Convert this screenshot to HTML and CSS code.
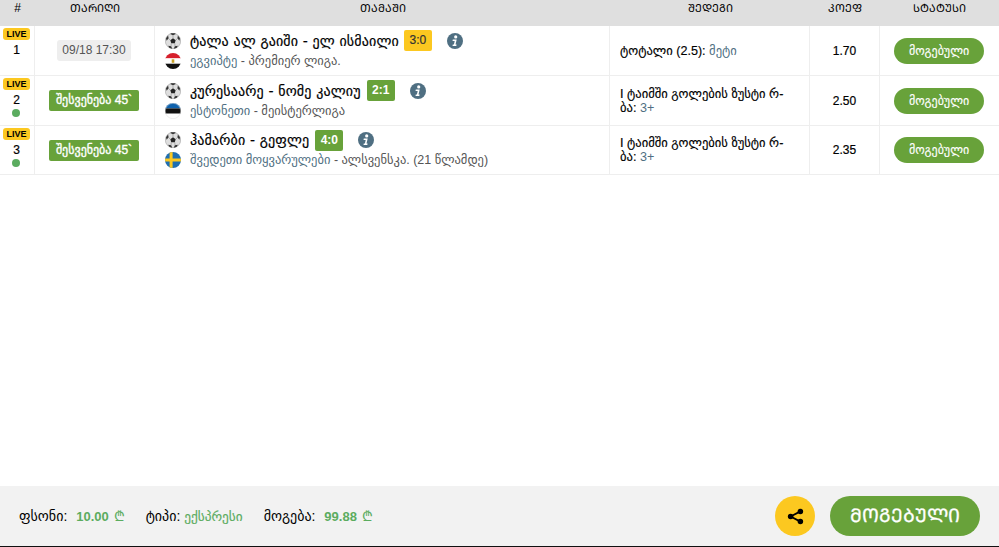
FILE: index.html
```html
<!DOCTYPE html>
<html lang="ka">
<head>
<meta charset="utf-8">
<title>ბილეთი</title>
<link rel="stylesheet" href="styles.css">
</head>
<body>
<svg class="defs" width="0" height="0" aria-hidden="true">
  <defs>
    <symbol id="ball" viewBox="0 0 16 16">
      <circle cx="8" cy="8" r="7.7" fill="#dedede" stroke="#8f8f8f" stroke-width=".5"/>
      <path d="M8 5.2l2.7 2-1 3.1H6.3l-1-3.1z" fill="#222"/>
      <path d="M5.2 .9L8 2.2l2.8-1.3-1-.6H6.2zM1 5.2l2.1-2.6.5 2.6-2 2.6zM15 5.2l-2.1-2.6-.5 2.6 2 2.6zM3.2 12.8l3 .5 1 2.4-3-1zM12.8 12.8l-3 .5-1 2.4 3-1z" fill="#333"/>
      <path d="M8 5.2v-3M10.7 7.2l2-2M9.7 10.3l.4 2.8M6.3 10.3L6 13.2M5.3 7.2l-2-2" stroke="#777" stroke-width=".5" fill="none"/>
    </symbol>
    <symbol id="info" viewBox="0 0 16 16">
      <circle cx="8" cy="8" r="8" fill="#4f6f82"/>
      <circle cx="8.7" cy="3.9" r="1.6" fill="#fff"/>
      <path d="M5.8 6.6h3.9l-1.2 5h1.1l-.3 1.3H5.5l.3-1.3h1.1l.8-3.7H5.5z" fill="#fff"/>
    </symbol>
    <clipPath id="round"><circle cx="8" cy="8" r="8"/></clipPath>
    <symbol id="eg" viewBox="0 0 16 16">
      <g clip-path="url(#round)">
        <rect width="16" height="5.4" fill="#d6202c"/>
        <rect y="5.4" width="16" height="5.3" fill="#fff"/>
        <rect y="10.7" width="16" height="5.3" fill="#111"/>
        <rect x="6.7" y="6.3" width="2.6" height="3.5" fill="#c9a227"/>
      </g>
    </symbol>
    <symbol id="ee" viewBox="0 0 16 16">
      <g clip-path="url(#round)">
        <rect width="16" height="5.4" fill="#0f62ad"/>
        <rect y="5.4" width="16" height="5.3" fill="#111"/>
        <rect y="10.7" width="16" height="5.3" fill="#fff"/>
      </g>
      <circle cx="8" cy="8" r="7.7" fill="none" stroke="#ddd" stroke-width=".5"/>
    </symbol>
    <symbol id="se" viewBox="0 0 16 16">
      <g clip-path="url(#round)">
        <rect width="16" height="16" fill="#1f6fb2"/>
        <rect x="4.6" width="3" height="16" fill="#fcc820"/>
        <rect y="6.5" width="16" height="3" fill="#fcc820"/>
      </g>
    </symbol>
  </defs>
</svg>

<main class="page">
  <table class="bets">
    <thead>
      <tr>
        <th class="c-num">#</th>
        <th class="c-date">ᲗᲐᲠᲘᲦᲘ</th>
        <th class="c-match">ᲗᲐᲛᲐᲨᲘ</th>
        <th class="c-result">ᲨᲔᲓᲔᲒᲘ</th>
        <th class="c-odds">ᲙᲝᲔᲤ</th>
        <th class="c-status">ᲡᲢᲐᲢᲣᲡᲘ</th>
      </tr>
    </thead>
    <tbody>
      <tr class="row">
        <td class="c-num"><span class="live">LIVE</span><span class="idx">1</span></td>
        <td class="c-date"><span class="date">09/18 17:30</span></td>
        <td class="c-match">
          <div class="line">
            <svg class="icon"><use href="#ball"/></svg>
            <span class="teams">ტალა ალ გაიში - ელ ისმაილი</span>
            <span class="score score-y">3:0</span>
            <svg class="info"><use href="#info"/></svg>
          </div>
          <div class="line">
            <svg class="icon"><use href="#eg"/></svg>
            <span class="league"><a>ეგვიპტე</a> - პრემიერ ლიგა.</span>
          </div>
        </td>
        <td class="c-result">ტოტალი (2.5): <a>მეტი</a></td>
        <td class="c-odds">1.70</td>
        <td class="c-status"><span class="won">მოგებული</span></td>
      </tr>
      <tr class="row">
        <td class="c-num"><span class="live">LIVE</span><span class="idx">2</span><span class="dot"></span></td>
        <td class="c-date"><span class="break">შესვენება 45`</span></td>
        <td class="c-match">
          <div class="line">
            <svg class="icon"><use href="#ball"/></svg>
            <span class="teams">კურესაარე - ნომე კალიუ</span>
            <span class="score">2:1</span>
            <svg class="info"><use href="#info"/></svg>
          </div>
          <div class="line">
            <svg class="icon"><use href="#ee"/></svg>
            <span class="league"><a>ესტონეთი</a> - მეისტერლიგა</span>
          </div>
        </td>
        <td class="c-result">I ტაიმში გოლების ზუსტი რ-ბა: <a>3+</a></td>
        <td class="c-odds">2.50</td>
        <td class="c-status"><span class="won">მოგებული</span></td>
      </tr>
      <tr class="row row-last">
        <td class="c-num"><span class="live">LIVE</span><span class="idx">3</span><span class="dot"></span></td>
        <td class="c-date"><span class="break">შესვენება 45`</span></td>
        <td class="c-match">
          <div class="line">
            <svg class="icon"><use href="#ball"/></svg>
            <span class="teams">ჰამარბი - გეფლე</span>
            <span class="score">4:0</span>
            <svg class="info"><use href="#info"/></svg>
          </div>
          <div class="line">
            <svg class="icon"><use href="#se"/></svg>
            <span class="league"><a>შვედეთი მოყვარულები</a> - ალსვენსკა. (21 წლამდე)</span>
          </div>
        </td>
        <td class="c-result">I ტაიმში გოლების ზუსტი რ-ბა: <a>3+</a></td>
        <td class="c-odds">2.35</td>
        <td class="c-status"><span class="won">მოგებული</span></td>
      </tr>
    </tbody>
  </table>

  <footer class="foot">
    <div class="sums">
      <span class="sum">ფსონი: <b>10.00</b> <i>₾</i></span>
      <span class="sum">ტიპი: <em>ექსპრესი</em></span>
      <span class="sum">მოგება: <b>99.88</b> <i>₾</i></span>
    </div>
    <div class="actions">
      <button class="share" type="button" aria-label="share">
        <svg viewBox="0 0 16 16" width="17" height="17"><circle cx="12.6" cy="3.2" r="2.6"/><circle cx="12.6" cy="12.8" r="2.6"/><circle cx="3.4" cy="8" r="2.6"/><path d="M3.4 8l9.2-4.8M3.4 8l9.2 4.8" stroke="#000" stroke-width="1.7" fill="none"/></svg>
      </button>
      <span class="big-won">ᲛᲝᲒᲔᲑᲣᲚᲘ</span>
    </div>
  </footer>
</main>
</body>
</html>
```

FILE: styles.css
```css
* { box-sizing: border-box; }
html, body { margin: 0; height: 100%; overflow: hidden; background: #fff; }
body { font: 12px "Liberation Sans", "DejaVu Sans", sans-serif; color: #000; }
.defs { position: absolute; }
.page { height: 547px; display: flex; flex-direction: column; justify-content: space-between; }

.bets { width: 999px; table-layout: fixed; border-collapse: separate; border-spacing: 0; }
.bets th { height: 26px; padding: 0 0 11px; background: #dfdfdf; font-weight: 400; font-size: 11px; line-height: 14px; }
.bets th.c-num { font-size: 12px; }
.bets td { height: 50px; padding: 0; border-bottom: 1px solid #eee; border-right: 1px solid #eee; text-align: center; vertical-align: middle; line-height: 14px; }
.row-last td { height: 49px; }
.bets td:last-child { border-right: 0; }
.c-num { width: 35px; }
.c-date { width: 120px; }
.c-match { width: 455px; }
.c-result { width: 200px; }
.c-odds { width: 70px; }
.c-status { width: 119px; }

.bets td.c-num { vertical-align: top; padding-top: 2px; line-height: 12px; }
.live { display: block; width: 27px; height: 12px; margin: 0 0 4px 3px; border-radius: 3px; background: #fcc820; font-size: 9px; font-weight: 700; line-height: 12px; text-align: center; }
.idx { display: block; font-size: 12px; padding-right: 1px; -webkit-text-stroke: .2px #000; }
.dot { display: block; width: 8px; height: 8px; margin: 3px auto 0; position: relative; left: -1px; border-radius: 50%; background: #5bac5f; }

.date { display: inline-block; width: 74px; height: 21px; margin-right: 1px; border-radius: 3px; background: #eee; color: #555; line-height: 21px; }
.break { display: inline-block; width: 90px; height: 21px; margin-right: 1px; border-radius: 2px; background: #68a23a; color: #fff; font-size: 12px; font-weight: 400; -webkit-text-stroke: .35px #fff; line-height: 21px; white-space: nowrap; }

.bets td.c-match { text-align: left; padding-left: 10px; }
.line { display: flex; align-items: center; height: 20px; }
.icon { flex: none; width: 16px; height: 16px; margin-right: 9px; }
.teams { font-family: "DejaVu Sans", sans-serif; font-size: 14px; letter-spacing: .15px; -webkit-text-stroke: .2px #000; }
.score { height: 21px; min-width: 28px; margin-left: 6px; border-radius: 2px; background: #68a23a; color: #fff; font-size: 12px; font-weight: 700; line-height: 21px; text-align: center; }
.score-y { margin-left: 5px; background: #fcc820; color: #333; font-weight: 400; -webkit-text-stroke: .2px #333; }
.info { flex: none; width: 16px; height: 16px; margin-left: 15px; }
.league { color: #555; font-size: 12.5px; }
a { color: #4f6f82; }

.bets td.c-result { text-align: left; padding: 0 16px 0 10px; font-size: 12.6px; -webkit-text-stroke: .15px #000; }
.bets td.c-result a { -webkit-text-stroke: 0; }
.bets td.c-odds { font-size: 12px; -webkit-text-stroke: .2px #000; }
.won { display: inline-block; width: 90px; height: 26px; margin-right: 1px; border-radius: 13px; background: #68a23a; color: #fff; font-size: 12px; -webkit-text-stroke: .15px #fff; line-height: 26px; }

.foot { height: 61px; display: flex; align-items: center; justify-content: space-between; padding: 0 19px; background: #f2f2f2; border-bottom: 1px solid #111; }
.sums { display: flex; gap: 21px; }
.sum { font-size: 14px; line-height: 18px; }
.sum b { margin-left: 5px; color: #5bac5f; font-size: 13px; font-weight: 700; }
.sum i { margin-left: 1px; color: #5bac5f; font-style: normal; }
.sum em { color: #5bac5f; font-size: 13.3px; font-style: normal; -webkit-text-stroke: .15px #5bac5f; }
.actions { display: flex; align-items: center; gap: 15px; }
.share { width: 40px; height: 40px; padding: 0; border: 0; border-radius: 50%; background: #fcc820; display: flex; align-items: center; justify-content: center; }
.big-won { width: 150px; height: 40px; border-radius: 20px; background: #68a23a; color: #fff; font-size: 18.8px; line-height: 40px; text-align: center; -webkit-text-stroke: .3px #fff; }
```
